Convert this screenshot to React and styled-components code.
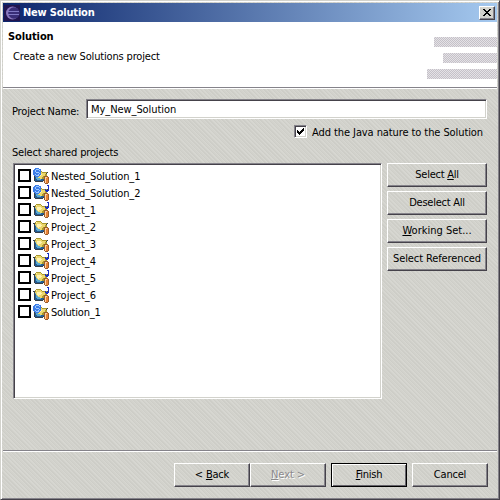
import React from "react";
import styled, { createGlobalStyle, css } from "styled-components";

const Global = createGlobalStyle`
  *{box-sizing:border-box}
  body{margin:0;width:500px;height:500px;overflow:hidden;font:11px/14px "DejaVu Sans Condensed","DejaVu Sans",sans-serif;font-stretch:condensed;color:#000}
`;
const face = css`
  background-color:#d2d2cc;
  background-image:repeating-linear-gradient(45deg,rgba(255,255,255,.1) 0 1px,rgba(120,120,115,.05) 1px 2px,transparent 2px 3px);
`;
const Frame = styled.div`${face};width:500px;height:500px;display:flex;flex-direction:column;padding:1px;
  border:1px solid;border-color:#d2d2cc #45424a #45424a #d2d2cc;
  box-shadow:inset 1px 1px #fff,inset -1px -1px #85838a;`;
const Text = styled.span`white-space:pre;display:block;letter-spacing:${p => p.$ls || 0}px;font-weight:${p => p.$bold ? 700 : 400};`;
const TitleBar = styled.header`height:19px;margin:1px 1px 0;display:flex;align-items:center;padding:0 2px 0 1px;color:#fff;
  background:linear-gradient(90deg,#0b256b,#a5c9ef);
  svg{margin-right:3px} `;
const TitleText = styled(Text)`flex:1;`;
const bevel = css`${face};border:1px solid;border-color:#fff #45424a #45424a #fff;box-shadow:inset -1px -1px #85838a;`;
const Close = styled.button`${bevel};width:16px;height:14px;padding:0;display:flex;justify-content:center;svg{margin:0}`;
const Banner = styled.section`height:66px;margin:0 1px;background:#fff;border-bottom:1px solid #85838a;box-shadow:0 1px #fff;
  display:flex;justify-content:space-between;`;
const Heading = styled.div`padding:8px 0 0 5px;display:flex;flex-direction:column;gap:6px;`;
const Description = styled(Text)`padding-left:5px;`;
const Stripes = styled.div`display:flex;flex-direction:column;align-items:flex-end;gap:6px;padding-top:15px;`;
const Stripe = styled.div`width:${p => p.$w}px;height:10px;background:conic-gradient(#c5c1c8 25%,#e4e2e6 0 50%,#c5c1c8 0 75%,#e4e2e6 0) 0 0/2px 2px;`;
const Body = styled.main`flex:1;padding:11px 11px 0 10px;display:flex;flex-direction:column;`;
const sunken = css`background:#fff;border:1px solid;border-color:#85838a #fff #fff #85838a;box-shadow:inset 1px 1px #45424a,inset -1px -1px #d2d2cc;`;
const Field = styled.label`display:flex;align-items:flex-end;justify-content:space-between;height:20px;`;
const Input = styled.div`${sunken};width:401px;height:20px;padding:3px 5px 0 4px;`;
const CheckLine = styled.label`height:15px;margin-top:6px;display:flex;justify-content:flex-end;gap:5px;padding-right:4px;
  ${Text}{padding-top:1px}`;
const Check = styled.span`${sunken};width:13px;height:13px;display:flex;padding:1px;`;
const ListLabel = styled(Text)`margin-top:6px;`;
const Columns = styled.div`display:flex;justify-content:space-between;padding-left:1px;margin-top:3px;`;
const List = styled.div`${sunken};width:369px;height:236px;padding:3px 4px;`;
const Row = styled.div`height:17px;display:flex;align-items:center;gap:2px;${Text}{padding-top:3px}`;
const Box = styled.span`width:13px;height:13px;border:2px solid #000;`;
const Actions = styled.div`display:flex;flex-direction:column;gap:4px;`;
const Button = styled.button`${bevel};font:inherit;height:24px;width:${p => p.$w || 76}px;padding:0;display:flex;align-items:center;justify-content:center;
  color:${p => p.$off ? "#8a898c" : "#000"};text-shadow:${p => p.$off ? "1px 1px #fff" : "none"};
  u{text-underline-offset:1px;text-decoration-thickness:1px}
  ${p => p.$main && "border-color:#000;box-shadow:inset 1px 1px #fff,inset -1px -1px #65636a;"}`;
const Footer = styled.footer`height:48px;margin:0 1px;border-top:1px solid #85838a;box-shadow:inset 0 1px #fff;display:flex;justify-content:flex-end;gap:5px;padding:12px 9px 0 0;`;
const Pair = styled.div`display:flex;`;

const palette = { k:"#35404a", y:"#ecd76c", g:"#ab982c", o:"#e98436", w:"#fff", b:"#3c7de8", d:"#235c96", t:"#5ba9cd", n:"#9a5c2c", l:"#9dc9ff", j:"#1a2ec4", c:"#fff3b0", p:"#fbd1a6" };
function Pixels({ map }) {
  return <svg width="16" height="16" shapeRendering="crispEdges">{map.flatMap((r, y) => [...r].map((c, x) => palette[c] && <rect key={x + "-" + y} x={x} y={y} width="1" height="1" fill={palette[c]} />))}</svg>;
}
const base = [
  "................",
  "................",
  "...ggggg........",
  "..gcyyyyg.......",
  "kkgyyyyyygggggk.",
  ".kyyccccyyyyyk..",
  ".ktycccccyyygg..",
  ".kdyccccyyyygg..",
  ".kdtycyyyygnnnn.",
  ".kdttyyyyggnppon",
  ".kdttttyyggnpoon",
  ".kddttttdddnpoon",
  ".kddddddddknpoon",
  "..kkkkkkkk.npoon",
  "...........npoon",
  "............nnn."];
function overlay(a, b) { return a.map((r, y) => [...r].map((c, x) => b[y] && b[y][x] && b[y][x] !== "." ? b[y][x] : c).join("")); }
const S = ["..bbbb..", ".bblllbb", "bblbbblb", "bblbbbbb", "bbblllbb", "bbbbbblb", "bblbblbb", ".bblllb.", "..bbbb.."];
const J = ["..............jj", "...............j", "...............j", "...............j", "............j..j", "............jjjj", ".............jj."];
const rows = [["Nested_Solution_1", 1, 0, -.12], ["Nested_Solution_2", 1, 1, -.12], ["Project_1", 0, 1, 0], ["Project_2", 0, 0, 0], ["Project_3", 0, 0, 0], ["Project_4", 0, 1, 0], ["Project_5", 0, 1, 0], ["Project_6", 0, 1, 0], ["Solution_1", 1, 0, -.2]];
const Eclipse = () => <svg width="16" height="16"><rect width="16" height="16" fill="#21154f" /><circle cx="8.5" cy="8" r="6.5" fill="#8a78bd" /><circle cx="10" cy="8" r="5.8" fill="#392e78" /><path d="M4 6.5H15M4 9.5H15" stroke="#7f79c4" /></svg>;

export default function App() {
  return <><Global /><Frame>
    <TitleBar><Eclipse /><TitleText $bold $ls={-.2}>New Solution</TitleText><Close><svg width="12" height="12" shapeRendering="crispEdges"><path d="M2 2h2v1h1v1h2v-1h1v-1h2v1h-1v1h-1v1h-1v1h1v1h1v1h1v1h-2v-1h-1v-1h-2v1h-1v1h-2v-1h1v-1h1v-1h1v-1h-1v-1h-1v-1h-1z" /></svg></Close></TitleBar>
    <Banner><Heading><Text $bold $ls={-.1}>Solution</Text><Description $ls={-.17}>Create a new Solutions project</Description></Heading>
      <Stripes><Stripe $w={63} /><Stripe $w={54} /><Stripe $w={70} /></Stripes></Banner>
    <Body>
      <Field><Text $ls={-.17}>Project Name:</Text><Input><Text $ls={-.07}>My_New_Solution</Text></Input></Field>
      <CheckLine><Check><svg width="9" height="9" shapeRendering="crispEdges"><path d="M1 3h1v1h1v1h1v-1h1v-1h1v-1h1v-1h1v3h-1v1h-1v1h-1v1h-1v1h-1v-1h-1v-1h-1z" /></svg></Check><Text $ls={-.09}>Add the Java nature to the Solution</Text></CheckLine>
      <ListLabel $ls={-.17}>Select shared projects</ListLabel>
      <Columns><List>{rows.map(([t, s, j, ls]) => { let m = base; if (s) m = overlay(m, S); if (j) m = overlay(m, J); return <Row key={t}><Box /><Pixels map={m} /><Text $ls={ls}>{t}</Text></Row>; })}</List>
        <Actions><Button $w={100}><Text $ls={-.25}>Select <u>A</u>ll</Text></Button><Button $w={100}><Text $ls={-.25}>Deselect All</Text></Button><Button $w={100}><Text><u>W</u>orking Set...</Text></Button><Button $w={100}><Text $ls={-.1}>Select Referenced</Text></Button></Actions></Columns>
    </Body>
    <Footer><Pair><Button><Text $ls={-.2}>&lt; <u>B</u>ack</Text></Button><Button $off><Text $ls={-.1}><u>N</u>ext &gt;</Text></Button></Pair><Button $main><Text $ls={-.25}><u>F</u>inish</Text></Button><Button><Text $ls={-.2}>Cancel</Text></Button></Footer>
  </Frame></>;
}
